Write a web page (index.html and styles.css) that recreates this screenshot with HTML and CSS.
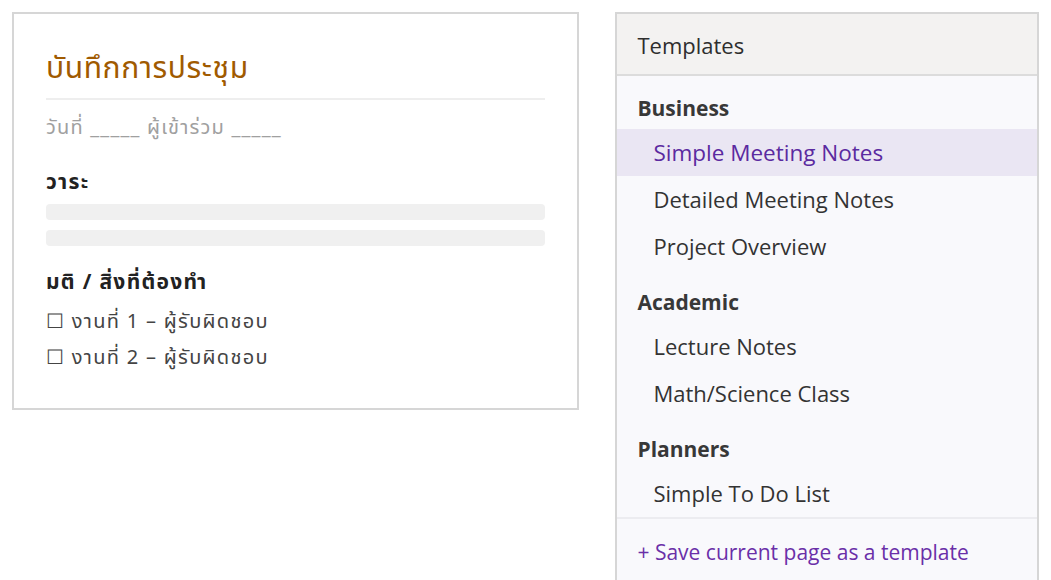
FILE: index.html
```html
<!DOCTYPE html>
<html lang="th">
<head>
<meta charset="utf-8">
<title>Templates</title>
<link rel="stylesheet" href="styles.css">
</head>
<body>
<div class="page">
  <section class="note">
    <h1 class="note-title">บันทึกการประชุม</h1>
    <p class="note-meta">วันที่ _____ ผู้เข้าร่วม _____</p>
    <h2 class="note-heading">วาระ</h2>
    <div class="bar first"></div>
    <div class="bar"></div>
    <h2 class="note-heading second">มติ / สิ่งที่ต้องทำ</h2>
    <p class="task first">☐ งานที่ 1 – ผู้รับผิดชอบ</p>
    <p class="task">☐ งานที่ 2 – ผู้รับผิดชอบ</p>
  </section>
  <aside class="panel">
    <div class="panel-header">Templates</div>
    <div class="panel-body">
      <div class="group-title">Business</div>
      <div class="item selected">Simple Meeting Notes</div>
      <div class="item">Detailed Meeting Notes</div>
      <div class="item">Project Overview</div>
      <div class="group-title">Academic</div>
      <div class="item">Lecture Notes</div>
      <div class="item">Math/Science Class</div>
      <div class="group-title">Planners</div>
      <div class="item">Simple To Do List</div>
      <div class="panel-footer"><span class="save-link">+ Save current page as a template</span></div>
    </div>
  </aside>
</div>
</body>
</html>
```

FILE: styles.css
```css
* { box-sizing: border-box; }
html, body {
  margin: 0;
  padding: 0;
  background: #ffffff;
}
body {
  font-family: "Open Sans", "Noto Sans Thai", "Noto Sans", sans-serif;
  overflow: hidden;
}
.page {
  display: flex;
  align-items: flex-start;
  padding: 12px;
}
.note {
  width: 568px;
  border: 2px solid #d6d6d6;
  padding: 35px 32px 32px;
  font-family: "Noto Sans Thai", "Noto Sans", sans-serif;
}
.note-title {
  margin: 0;
  font-size: 30px;
  font-weight: 400;
  letter-spacing: 0.6px;
  line-height: 40px;
  color: #a05a00;
  padding-bottom: 9px;
  border-bottom: 2px solid #eeeeee;
}
.note-meta {
  margin: 14px 0 0;
  font-size: 20px;
  letter-spacing: 1.2px;
  line-height: 28px;
  color: #a0a0a0;
}
.note-heading {
  margin: 27px 0 0;
  font-size: 21px;
  font-weight: 700;
  letter-spacing: 1.3px;
  line-height: 28px;
  color: #222222;
}
.note-heading.second {
  margin-top: 23px;
}
.bar {
  height: 16px;
  border-radius: 4px;
  background: #f0f0f0;
  margin-top: 10px;
}
.bar.first {
  margin-top: 7px;
}
.task {
  margin: 0;
  font-size: 20px;
  letter-spacing: 1.3px;
  line-height: 36px;
  color: #444444;
}
.task.first {
  margin-top: 7px;
}
.panel {
  width: 424px;
  height: 600px;
  margin-left: 36px;
  border: 2px solid #d6d6d6;
  border-bottom: none;
  background: #f9f9fc;
  display: flex;
  flex-direction: column;
}
.panel-header {
  height: 62px;
  background: #f3f2f1;
  border-bottom: 2px solid #dcdcdc;
  padding: 2px 0 0 20px;
  font-size: 22px;
  line-height: 58px;
  color: #2e2e2e;
}
.group-title {
  margin: 18px 0 7px;
  padding-left: 20px;
  font-size: 21px;
  font-weight: 700;
  line-height: 28px;
  color: #383838;
}
.item {
  height: 47px;
  padding-left: 36px;
  font-size: 22px;
  line-height: 47px;
  color: #333333;
}
.item.selected {
  background: #eae6f3;
  color: #5b2aa0;
  font-size: 22.5px;
}
.panel-footer {
  border-top: 2px solid #ececf0;
  padding: 19px 20px 0;
  font-size: 21px;
  line-height: 28px;
}
.save-link {
  color: #6a2fa8;
}
```
